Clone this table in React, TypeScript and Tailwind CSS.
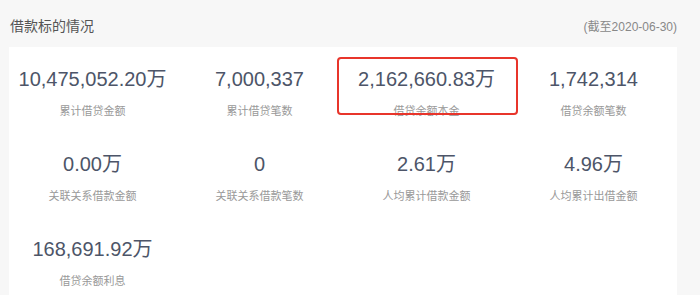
import React from 'react';

interface IStat {
  value: string;
  label: string;
  marked?: boolean;
}

const stats: IStat[] = [
  { value: '10,475,052.20万', label: '累计借贷金额' },
  { value: '7,000,337', label: '累计借贷笔数' },
  { value: '2,162,660.83万', label: '借贷余额本金', marked: true },
  { value: '1,742,314', label: '借贷余额笔数' },
  { value: '0.00万', label: '关联关系借款金额' },
  { value: '0', label: '关联关系借款笔数' },
  { value: '2.61万', label: '人均累计借款金额' },
  { value: '4.96万', label: '人均累计出借金额' },
  { value: '168,691.92万', label: '借贷余额利息' },
];

const StatCell = ({ stat }: { stat: IStat }) => (
  <div className="relative flex flex-col items-center">
    {stat.marked && <div className="absolute left-[-6px] right-[-8px] top-[-8px] h-[58px] rounded-[4px] border-2 border-[#e8352b]" />}
    <span className="text-[20px] leading-[28px] text-[#4d5568]">{stat.value}</span>
    <span className="mt-[9px] text-[11px] leading-[18px] text-[#999999]">{stat.label}</span>
  </div>
);

const App = () => {
  return (
    <main
      className="w-[700px] h-[295px] overflow-hidden bg-[#f7f7f7]"
      style={{ fontFamily: '"Liberation Sans", "Noto Sans CJK SC", sans-serif' }}
    >
      <div className="flex h-[47px] items-center justify-between pl-[10px] pr-[23px] pt-[6px]">
        <h2 className="text-[14px] text-[#555555]">借款标的情况</h2>
        <span className="text-[12px] text-[#888888]">(截至2020-06-30)</span>
      </div>
      <div className="ml-[9px] w-[668px] h-[260px] bg-white pt-[18px]">
        <div className="grid grid-cols-4 gap-y-[30px]">
          {stats.map((stat) => (
            <StatCell key={stat.label} stat={stat} />
          ))}
        </div>
      </div>
    </main>
  );
};

export default App;
